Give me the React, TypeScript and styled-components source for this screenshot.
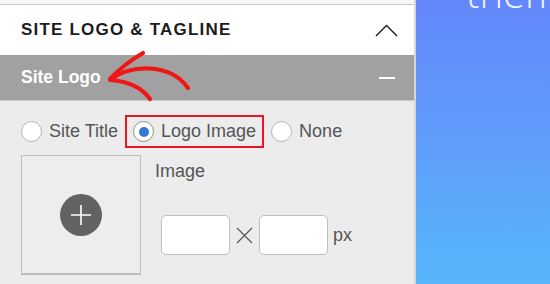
import React from "react";
import styled, { createGlobalStyle } from "styled-components";

const GlobalStyle = createGlobalStyle`
    body {
        margin: 0;
        font-family: "Liberation Sans", Arial, sans-serif;
        overflow: hidden;
    }
`;

export default function App() {
    return (
        <>
            <GlobalStyle />
            <Page>
                <Panel>
                    <Header>
                        <HeaderTitle>Site Logo &amp; Tagline</HeaderTitle>
                        <svg width="23" height="13" viewBox="0 0 23 13">
                            <path
                                d="M1 12 L11.5 1.5 L22 12"
                                fill="none"
                                stroke="#1a1a1a"
                                strokeWidth="1.4"
                            />
                        </svg>
                    </Header>
                    <SectionBar>
                        <span>Site Logo</span>
                        <MinusLine />
                    </SectionBar>
                    <Content>
                        <RadioRow>
                            <RadioOption>
                                <Radio />
                                Site Title
                            </RadioOption>
                            <RadioOption $highlight>
                                <Radio $checked />
                                Logo Image
                            </RadioOption>
                            <RadioOption>
                                <Radio />
                                None
                            </RadioOption>
                        </RadioRow>
                        <BodyRow>
                            <ImageBox>
                                <PlusCircle>
                                    <svg width="22" height="22" viewBox="0 0 22 22">
                                        <path
                                            d="M11 1 V21 M1 11 H21"
                                            stroke="#fff"
                                            strokeWidth="1.6"
                                        />
                                    </svg>
                                </PlusCircle>
                            </ImageBox>
                            <SizeColumn>
                                <FieldLabel>Image</FieldLabel>
                                <DimRow>
                                    <DimInput />
                                    <svg width="17" height="17" viewBox="0 0 17 17">
                                        <path
                                            d="M1 1 L16 16 M16 1 L1 16"
                                            stroke="#555"
                                            strokeWidth="1.2"
                                        />
                                    </svg>
                                    <DimInput />
                                    <Unit>px</Unit>
                                </DimRow>
                            </SizeColumn>
                        </BodyRow>
                    </Content>
                    <Annotation width="415" height="284" viewBox="0 0 415 284">
                        <g
                            fill="none"
                            stroke="#f01616"
                            strokeWidth="4.2"
                            strokeLinecap="round"
                        >
                            <path d="M112 79 C128 65, 170 62, 188 88" />
                            <path d="M143 53 Q124 64 110 79" />
                            <path d="M110 80 Q138 82 150 99" />
                        </g>
                    </Annotation>
                </Panel>
                <Hero>
                    <HeroText>them</HeroText>
                </Hero>
            </Page>
        </>
    );
}

const Page = styled.div`
    display: flex;
    width: 550px;
    height: 284px;
    overflow: hidden;
`;

const Panel = styled.div`
    position: relative;
    display: flex;
    flex-direction: column;
    width: 414px;
    flex-shrink: 0;
    padding-top: 4px;
    background-color: #f6f6f6;
    border-right: 2px solid #d6d6d6;
`;

const Header = styled.div`
    display: flex;
    justify-content: space-between;
    align-items: center;
    height: 50px;
    padding: 0 16px 0 21px;
    background-color: #ffffff;
    border-top: 1px solid #c9c9c9;
`;

const HeaderTitle = styled.div`
    font-size: 17px;
    font-weight: 700;
    letter-spacing: 1.2px;
    text-transform: uppercase;
    color: #1c1c1c;
`;

const SectionBar = styled.div`
    display: flex;
    justify-content: space-between;
    align-items: center;
    height: 45px;
    padding: 0 19px 0 21px;
    background-color: #a1a1a1;
    border-bottom: 1px solid #cacaca;
    color: #ffffff;
    font-size: 17.5px;
    font-weight: 700;
`;

const MinusLine = styled.div`
    width: 16px;
    height: 2px;
    background-color: #ffffff;
`;

const Content = styled.div`
    flex: 1;
    padding: 14px 0 0 21px;
    background-color: #ececec;
`;

const RadioRow = styled.div`
    display: flex;
    align-items: center;
    gap: 7px;
    height: 33px;
`;

const RadioOption = styled.label<{ $highlight?: boolean }>`
    display: flex;
    align-items: center;
    gap: 7px;
    height: 33px;
    box-sizing: border-box;
    padding: ${(p) => (p.$highlight ? "0 6px" : "0")};
    border: ${(p) => (p.$highlight ? "2px solid #ea1520" : "none")};
    font-size: 18px;
    color: #555555;
`;

const Radio = styled.span<{ $checked?: boolean }>`
    display: flex;
    justify-content: center;
    align-items: center;
    width: 21px;
    height: 21px;
    box-sizing: border-box;
    border-radius: 50%;
    border: 1px solid ${(p) => (p.$checked ? "#8e8e8e" : "#b3b3b3")};
    background-color: #ffffff;

    &::after {
        content: "";
        display: ${(p) => (p.$checked ? "block" : "none")};
        width: 10px;
        height: 10px;
        border-radius: 50%;
        background-color: #3479d3;
    }
`;

const BodyRow = styled.div`
    display: flex;
    gap: 14px;
    margin-top: 7px;
`;

const ImageBox = styled.div`
    display: flex;
    justify-content: center;
    align-items: center;
    width: 120px;
    height: 120px;
    box-sizing: border-box;
    border: 1px solid #bdbdbd;
    border-bottom-width: 2px;
    background-color: #ededed;
`;

const PlusCircle = styled.div`
    display: flex;
    justify-content: center;
    align-items: center;
    width: 42px;
    height: 42px;
    border-radius: 50%;
    background-color: #626262;
`;

const SizeColumn = styled.div`
    display: flex;
    flex-direction: column;
    padding-top: 6px;
`;

const FieldLabel = styled.div`
    font-size: 18px;
    line-height: 20px;
    color: #555555;
`;

const DimRow = styled.div`
    display: flex;
    align-items: center;
    gap: 6px;
    margin-top: 34px;
    padding-left: 6px;
`;

const DimInput = styled.div`
    width: 69px;
    height: 40px;
    box-sizing: border-box;
    border: 1px solid #bfbfbf;
    border-radius: 5px;
    background-color: #ffffff;
`;

const Unit = styled.span`
    margin-left: -1px;
    font-size: 18px;
    color: #555555;
`;

const Annotation = styled.svg`
    position: absolute;
    top: 0;
    left: 0;
    pointer-events: none;
`;

const Hero = styled.div`
    flex: 1;
    padding-left: 50px;
    background: linear-gradient(180deg, #6487fb 0%, #5f9dfb 50%, #57b6fb 100%);
    overflow: hidden;
`;

const HeroText = styled.div`
    margin-top: -27px;
    font-family: "Open Sans", sans-serif;
    font-weight: 300;
    font-size: 40px;
    line-height: 40px;
    color: rgba(255, 255, 255, 0.92);
    white-space: nowrap;
`;
